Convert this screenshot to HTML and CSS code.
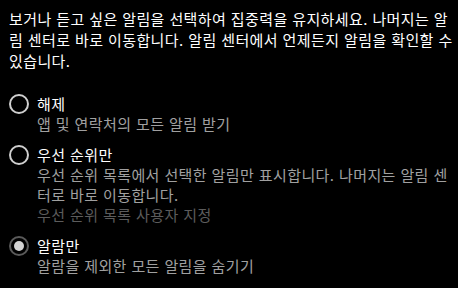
FILE: index.html
```html
<!DOCTYPE html>
<html lang="ko">
<head>
  <meta charset="UTF-8">
  <meta name="viewport" content="width=device-width, initial-scale=1.0">
  <title>집중 지원</title>
  <link rel="stylesheet" href="styles.css">
</head>
<body>

  <div class="panel">
    <p class="intro">보거나 듣고 싶은 알림을 선택하여 집중력을 유지하세요. 나머지는 알림 센터로 바로 이동합니다. 알림 센터에서 언제든지 알림을 확인할 수 있습니다.</p>

    <div class="options">
      <label class="option">
        <span class="radio"></span>
        <span class="option-text">
          <span class="option-title">해제</span>
          <span class="option-desc">앱 및 연락처의 모든 알림 받기</span>
        </span>
      </label>

      <label class="option">
        <span class="radio"></span>
        <span class="option-text">
          <span class="option-title">우선 순위만</span>
          <span class="option-desc">우선 순위 목록에서 선택한 알림만 표시합니다. 나머지는 알림 센터로 바로 이동합니다.</span>
          <span class="option-link">우선 순위 목록 사용자 지정</span>
        </span>
      </label>

      <!-- 선택된 항목 -->
      <label class="option">
        <span class="radio checked"></span>
        <span class="option-text">
          <span class="option-title">알람만</span>
          <span class="option-desc">알람을 제외한 모든 알림을 숨기기</span>
        </span>
      </label>
    </div>
  </div>

</body>
</html>
```

FILE: styles.css
```css
html, body {
  background-color: #000;
}
body {
  margin: 0;
  font-family: "Noto Sans CJK KR", "Noto Sans", sans-serif;
  font-size: 15px;
  line-height: 20px;
  letter-spacing: 0.4px;
  word-break: break-all;
  color: #fff;
}
.panel {
  padding: 8px 1px 0 9px;
}
.intro {
  margin: 0;
  line-height: 21px;
}
.options {
  display: flex;
  flex-direction: column;
  gap: 11px;
  margin-top: 23px;
  margin-right: 7px;
}
.option {
  display: flex;
  gap: 8px;
  align-items: flex-start;
}
.radio {
  flex: none;
  width: 20px;
  height: 20px;
  box-sizing: border-box;
  border: 2px solid #cfcfcf;
  border-radius: 50%;
  display: flex;
  align-items: center;
  justify-content: center;
}
.radio.checked {
  border-color: #5a5a5a;
}
.radio.checked::after {
  content: "";
  width: 10px;
  height: 10px;
  border-radius: 50%;
  background-color: #d4d4d4;
}
.option-text {
  display: flex;
  flex-direction: column;
}
.option-title {
  color: #fff;
}
.option-desc {
  color: #a0a0a0;
}
.option-link {
  color: #5c5c5c;
}
```
